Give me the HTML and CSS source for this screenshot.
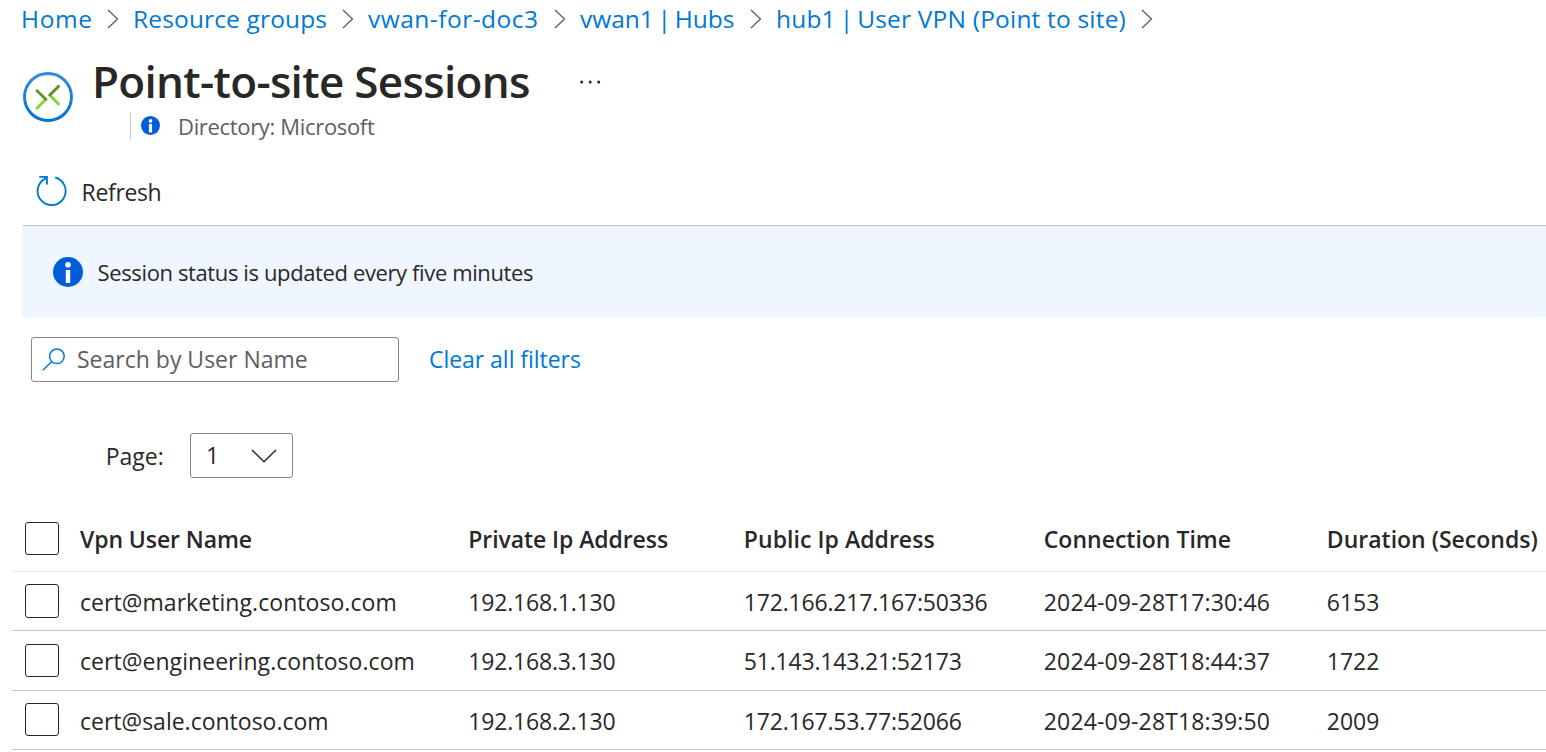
FILE: index.html
```html
<!DOCTYPE html>
<html lang="en">
<head>
<meta charset="utf-8">
<title>Point-to-site Sessions</title>
<link rel="stylesheet" href="styles.css">
</head>
<body>
<nav class="breadcrumb">
  <a class="crumb crumb-home">Home</a>
  <svg class="sep" viewBox="0 0 12 20"><path d="M1 1l9.5 9L1 19"/></svg>
  <a class="crumb crumb-groups">Resource groups</a>
  <svg class="sep" viewBox="0 0 12 20"><path d="M1 1l9.5 9L1 19"/></svg>
  <a class="crumb crumb-vwan">vwan-for-doc3</a>
  <svg class="sep" viewBox="0 0 12 20"><path d="M1 1l9.5 9L1 19"/></svg>
  <a class="crumb crumb-hubs">vwan1<span class="pipe"> | </span>Hubs</a>
  <svg class="sep" viewBox="0 0 12 20"><path d="M1 1l9.5 9L1 19"/></svg>
  <a class="crumb crumb-vpn">hub1<span class="pipe"> | </span>User VPN (Point to site)</a>
  <svg class="sep" viewBox="0 0 12 20"><path d="M1 1l9.5 9L1 19"/></svg>
</nav>

<header class="header">
  <svg class="logo" viewBox="0 0 50 50">
    <defs>
      <linearGradient id="ring" x1="0" y1="0" x2="0" y2="1"><stop offset="0" stop-color="#2f8be6"/><stop offset="1" stop-color="#0474d0"/></linearGradient>
    </defs>
    <circle cx="25" cy="25" r="23.5" fill="#fff" stroke="url(#ring)" stroke-width="2.9"/>
    <g fill="none" stroke-width="2.9" stroke-linecap="round">
      <path d="M14 36.2L22.8 27.3" stroke="#86d633"/>
      <path d="M14 18.8L22.8 27.3" stroke="#5e9624"/>
      <path d="M35.6 32L26.8 23" stroke="#86d633"/>
      <path d="M35.6 14.4L26.8 23" stroke="#5e9624"/>
    </g>
  </svg>
  <div class="heading">
    <div class="title-row">
      <h1 class="title">Point-to-site Sessions</h1>
      <svg class="more" viewBox="0 0 22 4"><circle cx="2.7" cy="2" r="1.5"/><circle cx="11.2" cy="2" r="1.5"/><circle cx="19.7" cy="2" r="1.5"/></svg>
    </div>
    <div class="subtitle">
      <svg class="info-small" viewBox="0 0 30 30"><circle cx="15" cy="15" r="15"/><circle class="mark" cx="15" cy="7.8" r="2.9"/><path class="mark" d="M12.5 12.5h5v13.5h-5z"/></svg>
      <span class="directory">Directory: Microsoft</span>
    </div>
  </div>
</header>

<div class="toolbar">
  <svg class="refresh-icon" viewBox="0 0 32 32"><path d="M19.2 2.5A14 14 0 1 1 9.2 3.6L10.7 2.6M3.3 1.9H10.9V9.6"/></svg>
  <span class="refresh">Refresh</span>
</div>

<div class="banner">
  <svg class="info" viewBox="0 0 30 30"><circle cx="15" cy="15" r="15"/><circle class="mark" cx="15" cy="7.7" r="2.8"/><path class="mark" d="M12.8 13h4.4v13h-4.4z"/></svg>
  <span class="banner-text">Session status is updated every five minutes</span>
</div>

<div class="filters">
  <div class="search">
    <svg class="search-icon" viewBox="0 0 23 23"><circle cx="14.9" cy="8.3" r="7.3"/><path d="M9.8 13.5L.8 22.3"/></svg>
    <span>Search by User Name</span>
  </div>
  <a class="clear">Clear all filters</a>
</div>

<div class="pager">
  <span class="pager-label">Page:</span>
  <div class="select">
    <span>1</span>
    <svg class="chevron" viewBox="0 0 26 14"><path d="M1 1l12 11.7L25 1"/></svg>
  </div>
</div>

<div class="table">
  <div class="row head">
    <i class="check"></i>
    <span class="ls-user">Vpn User Name</span>
    <span class="ls-private">Private Ip Address</span>
    <span class="ls-public">Public Ip Address</span>
    <span>Connection Time</span>
    <span>Duration (Seconds)</span>
  </div>
  <div class="row">
    <i class="check tall"></i>
    <span class="user">cert@marketing.contoso.com</span><span class="ip">192.168.1.130</span><span class="ip">172.166.217.167:50336</span><span class="time">2024-09-28T17:30:46</span><span>6153</span>
  </div>
  <div class="row mid">
    <i class="check"></i>
    <span class="user">cert@engineering.contoso.com</span><span class="ip">192.168.3.130</span><span class="ip">51.143.143.21:52173</span><span class="time">2024-09-28T18:44:37</span><span>1722</span>
  </div>
  <div class="row last">
    <i class="check"></i>
    <span>cert@sale.contoso.com</span><span class="ip">192.168.2.130</span><span class="ip">172.167.53.77:52066</span><span class="time">2024-09-28T18:39:50</span><span>2009</span>
  </div>
</div>
</body>
</html>
```
FILE: styles.css
```css
* { box-sizing: border-box; }
body {
  margin: 0;
  height: 752px;
  overflow: hidden;
  background: #fff;
  color: #292827;
  font: 23px/30px "Open Sans", "Noto Sans", sans-serif;
}
svg { display: block; flex: none; fill: none; }
span, a { white-space: nowrap; }

.breadcrumb {
  display: flex;
  align-items: center;
  height: 38px;
  padding-left: 21px;
  font-size: 24.5px;
  color: #0078d4;
}
.crumb { flex: none; }
.crumb-home { width: 71px; letter-spacing: .6px; }
.crumb-groups { width: 194px; letter-spacing: .15px; }
.crumb-vwan { width: 171px; letter-spacing: .49px; }
.crumb-hubs { width: 155px; }
.crumb-vpn { width: 350px; letter-spacing: .19px; }
.pipe { white-space: pre; margin: 0 -2.7px; }
.sep { width: 12px; height: 20px; margin: 0 14px 0 15px; stroke: #605e5c; stroke-width: 1.3; }

.header { display: flex; height: 124px; padding: 20px 0 0 23px; }
.logo { width: 50px; height: 50px; margin-top: 14px; }
.heading { margin-left: 19px; }
.title-row { display: flex; align-items: center; height: 50px; }
.title { margin: -4px 0 0; width: 460px; font-size: 44px; line-height: 50px; font-weight: 600; letter-spacing: -.69px; white-space: nowrap; }
.more { width: 22px; height: 4px; margin: -2px 0 0 27px; fill: #292827; }
.subtitle {
  display: flex;
  align-items: center;
  height: 26px;
  margin: 5px 0 0 38px;
  padding-left: 10px;
  border-left: 1px solid #c8c6c4;
}
.info-small { width: 19px; height: 19px; margin-top: -1px; fill: #015cda; }
.directory { margin: -1px 0 0 18px; font-size: 22px; letter-spacing: -.33px; color: #605e5c; }
.mark { fill: #fff; }

.toolbar { display: flex; align-items: center; height: 63px; padding-left: 36px; }
.refresh-icon { width: 32px; height: 32px; margin-top: -6px; stroke: #0078d4; stroke-width: 1.9; }
.refresh { margin: -3px 0 0 13.6px; letter-spacing: -.35px; }

.banner {
  display: flex;
  align-items: center;
  height: 93px;
  margin-left: 22px;
  padding-left: 31px;
  border-top: 1px solid #c8c6c4;
  border-radius: 2px 0 0 4px;
  background: #eff6ff;
}
.info { width: 30px; height: 30px; fill: #015cda; }
.banner-text { margin: -1px 0 0 14.6px; font-size: 22px; letter-spacing: -.38px; }

.filters { display: flex; align-items: center; margin: 19px 0 0 31px; height: 45px; }
.search {
  display: flex;
  align-items: center;
  width: 368px;
  height: 45px;
  padding: 0 0 2px 10px;
  border: 1px solid #8a8886;
  border-radius: 3px;
  color: #605e5c;
}
.search-icon { width: 23px; height: 23px; margin: 2px 12px 0 0; stroke: #0078d4; stroke-width: 1.5; }
.clear { margin: -2px 0 0 30px; letter-spacing: -.04px; color: #0078d4; }

.pager { display: flex; align-items: center; height: 45px; margin: 51px 0 0 105.7px; }
.pager-label { width: 84.3px; padding-top: 1px; }
.select {
  display: flex;
  align-items: center;
  justify-content: space-between;
  width: 103px;
  height: 45px;
  padding: 0 15px 2px;
  border: 1px solid #8a8886;
  border-radius: 3px;
}
.chevron { width: 26px; height: 14px; margin-top: 3px; stroke: #292827; stroke-width: 1.5; }

.table { margin: 28px 0 0 12px; }
.row {
  display: grid;
  grid-template-columns: 68px 388.3px 275.5px 300px 283px 1fr;
  align-items: center;
  height: 59px;
  border-bottom: 1px solid #c8c6c4;
}
.row span { padding-top: 2px; }
.row.mid { height: 60px; }
.row.mid span { padding-top: 0; }
.row.head { height: 66px; border-color: #e9e8e7; font-weight: 600; }
.row.head span { padding-top: 0; }
.check { width: 34px; height: 33px; margin-left: 13px; border: 1px solid #292827; border-radius: 3px; }
.tall { height: 34px; }
.last .check { margin-top: -2px; }
.ls-user { letter-spacing: -.1px; }
.ls-private { letter-spacing: -.08px; }
.ls-public { letter-spacing: .05px; }
.user { letter-spacing: .06px; }
.ip { letter-spacing: -.19px; }
.time { letter-spacing: .14px; }
```
